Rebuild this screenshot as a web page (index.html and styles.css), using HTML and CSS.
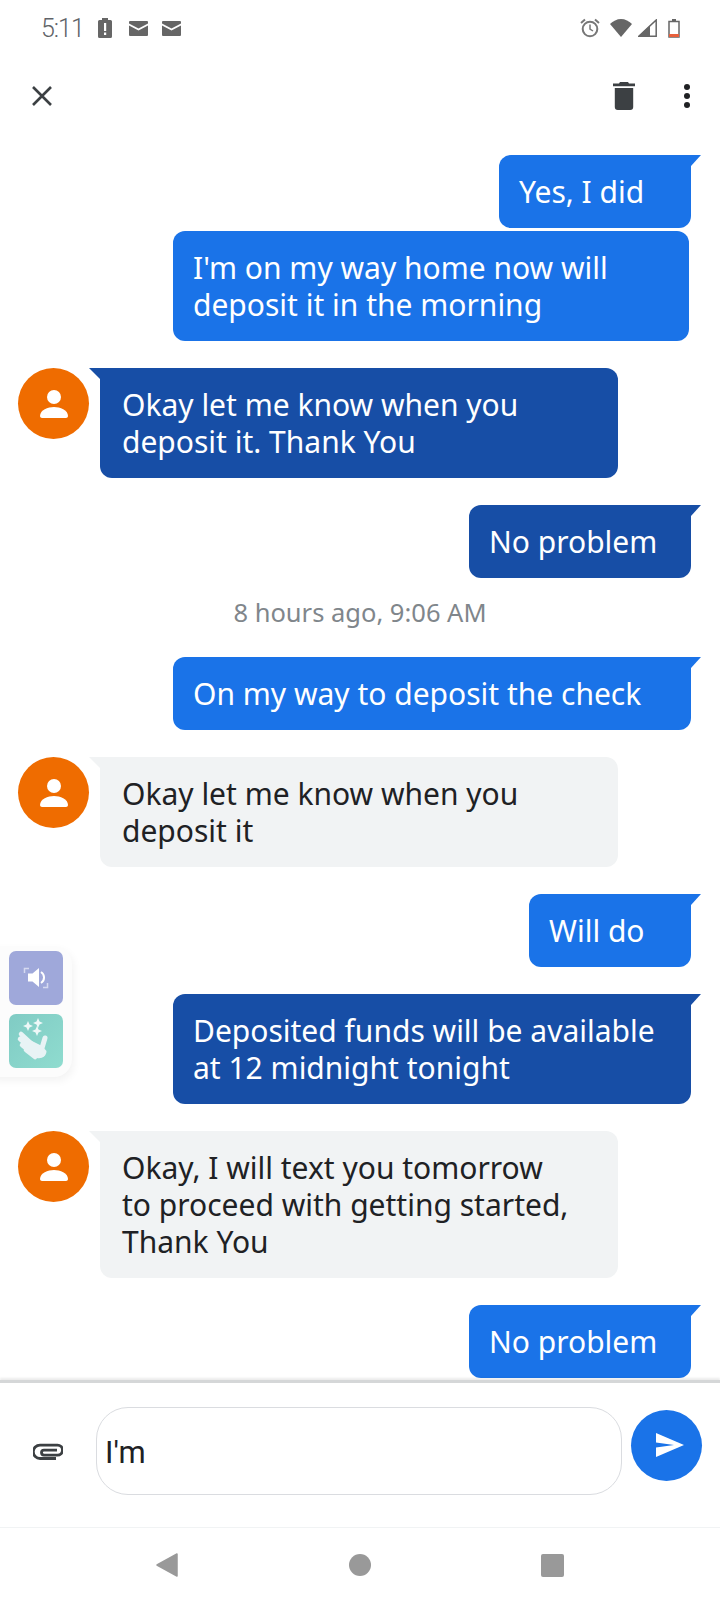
FILE: index.html
```html
<!DOCTYPE html>
<html lang="en">
<head>
	<meta charset="UTF-8">
	<title>Messages</title>
	<link rel="stylesheet" href="styles.css">
</head>
<body>
<div class="app">
	<div class="status">
		<span class="clock">5:11</span>
		<svg class="ic-alert" width="14" height="20" viewBox="0 0 14 20"><path d="M4 0h6v2h2.500a1.500 1.500 0 0 1 1.500 1.500V18.500a1.500 1.500 0 0 1-1.500 1.500H1.500A1.500 1.500 0 0 1 0 18.500V3.500A1.500 1.500 0 0 1 1.500 2H4z" fill="#666"/><path d="M6 5h2.200v8H6zM6 14.500h2.200V17H6z" fill="#fff"/></svg>
		<svg class="ic-mail" width="19" height="15" viewBox="0 0 19 15"><path d="M1 0h17a1 1 0 0 1 1 1v1.500L9.500 7.500 0 2.500V1a1 1 0 0 1 1-1zM0 4.500l9.500 5 9.500-5V14a1 1 0 0 1-1 1H1a1 1 0 0 1-1-1z" fill="#666"/></svg>
		<svg class="ic-mail" width="19" height="15" viewBox="0 0 19 15"><path d="M1 0h17a1 1 0 0 1 1 1v1.500L9.500 7.500 0 2.500V1a1 1 0 0 1 1-1zM0 4.500l9.500 5 9.500-5V14a1 1 0 0 1-1 1H1a1 1 0 0 1-1-1z" fill="#666"/></svg>
		<span class="spacer"></span>
		<svg width="20" height="20" viewBox="0 0 20 20"><circle cx="10" cy="11" r="7.300" fill="none" stroke="#777" stroke-width="2"/><path d="M10 6.500V11l3 2" fill="none" stroke="#777" stroke-width="1.500"/><path d="M1 5l4-3.500M19 5l-4-3.500" stroke="#777" stroke-width="2"/></svg>
		<svg class="ic-wifi" width="22" height="18" viewBox="0 0 22 18"><path d="M0 5C3 2 7 0 11 0s8 2 11 5L11 18z" fill="#666"/></svg>
		<svg class="ic-signal" width="19" height="18" viewBox="0 0 19 18"><path d="M18.200 1v16.200H1z" fill="none" stroke="#666" stroke-width="1.500"/><path d="M12 6.500V18H0z" fill="#666"/></svg>
		<svg class="ic-batt" width="12" height="19" viewBox="0 0 12 19"><path d="M4 0h4v2H4z" fill="#666"/><rect x="1" y="2.500" width="10" height="15.500" fill="none" stroke="#666" stroke-width="1.500"/><rect x="1" y="15" width="10" height="3" fill="#e8603c"/></svg>
	</div>

	<div class="toolbar">
		<svg width="20" height="20" viewBox="0 0 20 20"><path d="M1 1l18 18M19 1L1 19" stroke="#3c4043" stroke-width="2.600" fill="none"/></svg>
		<span class="spacer"></span>
		<svg class="ic-trash" width="22" height="28" viewBox="0 0 22 28"><path d="M7 0h8l1 1.500h6v2.800H0V1.500h6zM1.800 6h18.400v19a3 3 0 0 1-3 3H4.800a3 3 0 0 1-3-3z" fill="#3c4043"/></svg>
		<svg class="ic-more" width="6" height="24" viewBox="0 0 6 24"><circle cx="3" cy="3" r="3" fill="#202124"/><circle cx="3" cy="12" r="3" fill="#202124"/><circle cx="3" cy="21" r="3" fill="#202124"/></svg>
	</div>

	<div class="thread">
		<div class="msg out first"><div class="bubble blue w-yes">Yes, I did</div></div>
		<div class="msg out close"><div class="bubble blue notail">I'm on my way home now will deposit it in the morning</div></div>
		<div class="msg in">
			<div class="avatar"><svg width="28" height="28" viewBox="0 0 28 28"><circle cx="14" cy="7" r="7" fill="#fff"/><path d="M0 26c0-6 8-9 14-9s14 3 14 9c0 1-1 2-2 2H2c-1 0-2-1-2-2z" fill="#fff"/></svg></div>
			<div class="bubble dark">Okay let me know when you deposit it. Thank You</div>
		</div>
		<div class="msg out"><div class="bubble dark w-no">No problem</div></div>
		<div class="stamp">8 hours ago, 9:06 AM</div>
		<div class="msg out after-stamp"><div class="bubble blue wide">On my way to deposit the check</div></div>
		<div class="msg in">
			<div class="avatar"><svg width="28" height="28" viewBox="0 0 28 28"><circle cx="14" cy="7" r="7" fill="#fff"/><path d="M0 26c0-6 8-9 14-9s14 3 14 9c0 1-1 2-2 2H2c-1 0-2-1-2-2z" fill="#fff"/></svg></div>
			<div class="bubble grey">Okay let me know when you deposit it</div>
		</div>
		<div class="msg out"><div class="bubble blue w-will">Will do</div></div>
		<div class="msg out"><div class="bubble dark wide">Deposited funds will be available at 12 midnight tonight</div></div>
		<div class="msg in">
			<div class="avatar"><svg width="28" height="28" viewBox="0 0 28 28"><circle cx="14" cy="7" r="7" fill="#fff"/><path d="M0 26c0-6 8-9 14-9s14 3 14 9c0 1-1 2-2 2H2c-1 0-2-1-2-2z" fill="#fff"/></svg></div>
			<div class="bubble grey">Okay, I will text you tomorrow<br>to proceed with getting started, Thank You</div>
		</div>
		<div class="msg out"><div class="bubble blue w-no">No problem</div></div>
	</div>

	<div class="composer">
		<svg class="ic-clip" width="30" height="18" viewBox="0 0 30 18"><path d="M23 15.500H7a6.700 6.700 0 0 1 0-13.400h17.500a5 5 0 0 1 0 10H11a2.500 2.500 0 0 1 0-5h13" fill="none" stroke="#3c4043" stroke-width="2.800"/></svg>
		<div class="input">I'm</div>
		<div class="send"><svg width="28" height="24" viewBox="0 0 28 24"><path d="M0 0l28 12L0 24v-9.500L18 12 0 9.500z" fill="#fff"/></svg></div>
	</div>

	<div class="nav">
		<svg width="22" height="24" viewBox="0 0 22 24"><path d="M21 1v22L1 12z" fill="#999" stroke="#999" stroke-width="1.500" stroke-linejoin="round"/></svg>
		<svg width="22" height="22" viewBox="0 0 22 22"><circle cx="11" cy="11" r="11" fill="#999"/></svg>
		<svg width="23" height="23" viewBox="0 0 23 23"><rect width="23" height="23" rx="2" fill="#999"/></svg>
	</div>

	<div class="floater">
		<div class="tile tile-sound">
			<svg width="54" height="54" viewBox="0 0 54 54"><path d="M15.500 22v-4.500H20M38.500 32v4.500H34" fill="none" stroke="#d5d9f0" stroke-width="1.500"/><path d="M19 22.500h4.500L30 17v19l-6.500-5.500H19z" fill="#fff"/><path d="M32 21a6.500 6.500 0 0 1 0 11" fill="none" stroke="#fff" stroke-width="2"/></svg>
		</div>
		<div class="tile tile-hands">
			<svg width="54" height="54" viewBox="0 0 54 54"><path d="M19 7l1.500 3.500L24 12l-3.500 1.500L19 17l-1.500-3.500L14 12l3.500-1.500zM29 4l1.500 3.500L34 9l-3.500 1.500L29 14l-1.500-3.500L24 9l3.500-1.500zM28 12l1.500 3.500L33 17l-3.500 1.500L28 22l-1.500-3.500L23 17l3.500-1.500z" fill="#eef8f8"/><path d="M12 20l14 13M11 25l14 12M13 31l11 9M17 36l9 7" stroke="#e8f3f5" stroke-width="4.500" stroke-linecap="round"/><path d="M36 24l-3 10" stroke="#e8f3f5" stroke-width="5" stroke-linecap="round"/><path d="M21 26l12 6 4.500 5c0 5-4.500 8-9.500 7l-8-4z" fill="#e8f3f5"/></svg>
		</div>
	</div>
</div>
</body>
</html>
```

FILE: styles.css
```css
*{padding: 0;margin: 0;box-sizing: border-box;}
body{background: #fff;font-family: "Noto Sans", sans-serif;}
svg{display: block;flex: none;}
.app{width: 720px;height: 1600px;position: relative;overflow: hidden;display: flex;flex-direction: column;}
.spacer{flex: 1;}

.status{height: 56px;padding: 0 40px 0 41px;display: flex;align-items: center;}
.clock{font-family: Roboto, sans-serif;font-weight: 300;font-size: 25px;letter-spacing: -1px;color: #5f6368;width: 57px;}
.ic-mail{margin-left: 17px;}
.ic-mail + .ic-mail{margin-left: 14px;}
.ic-wifi{margin-left: 10px;}
.ic-signal{margin-left: 6px;}
.ic-batt{margin-left: 11px;}

.toolbar{height: 80px;padding: 0 30px 0 32px;display: flex;align-items: center;}
.ic-more{margin-left: 49px;}

.thread{flex: 1;display: flex;flex-direction: column;overflow: hidden;padding-top: 19px;}
.msg{display: flex;margin-top: 27px;flex: none;}
.msg.first{margin-top: 0;}
.msg.close{margin-top: 3px;}
.msg.after-stamp{margin-top: 28px;}
.out{justify-content: flex-end;padding-right: 29px;}
.out.close{padding-right: 31px;}
.in{padding-left: 18px;}

.bubble{position: relative;font-size: 30px;line-height: 37px;padding: 18px 20px;border-radius: 12px;color: #fff;}
.blue{background: #1a73e8;}
.dark{background: #174ea6;}
.grey{background: #f1f3f4;color: #202124;}
.wide{width: 518px;}
.w-yes{width: 192px;}
.w-no{width: 222px;}
.w-will{width: 162px;}
.in .bubble{width: 518px;margin-left: 11px;padding: 18px 22px;border-top-left-radius: 0;}
.out .bubble{border-top-right-radius: 0;}
.out .bubble.notail{border-top-right-radius: 12px;width: 516px;}

.out .bubble::after{content: "";position: absolute;top: 0;right: -10px;border-top: 11px solid #1a73e8;border-right: 10px solid transparent;}
.out .dark::after{border-top-color: #174ea6;}
.out .notail::after{display: none;}
.in .bubble::before{content: "";position: absolute;top: 0;left: -11px;border-top: 11px solid #174ea6;border-left: 11px solid transparent;}
.in .grey::before{border-top-color: #f1f3f4;}

.avatar{width: 71px;height: 71px;border-radius: 50%;background: #ef6c00;display: flex;align-items: center;justify-content: center;}
.stamp{text-align: center;font-size: 25.500px;line-height: 34px;color: #80868b;margin-top: 17px;flex: none;}

.composer{height: 148px;border-top: 3px solid #d5d7d8;box-shadow: 0 -2px 2px rgba(0,0,0,.08);position: relative;display: flex;align-items: center;padding: 0 18px 0 33px;border-bottom: 1px solid #f1f3f4;}
.ic-clip{margin-bottom: 7px;}
.input{width: 526px;height: 88px;margin-left: 33px;margin-bottom: 8px;border: 1px solid #dadce0;border-radius: 32px;font-family: Roboto, sans-serif;font-size: 31px;color: #202124;padding: 3px 0 0 8px;display: flex;align-items: center;}
.send{width: 71px;height: 71px;border-radius: 50%;background: #1a73e8;margin-left: 9px;margin-bottom: 20px;display: flex;align-items: center;justify-content: center;padding-left: 7px;}

.nav{height: 72px;display: flex;align-items: center;padding: 2px 156px 0;justify-content: space-between;}

.floater{position: absolute;left: -20px;top: 946px;width: 92px;height: 131px;background: #fcfcfc;border-radius: 18px;box-shadow: 2px 4px 8px rgba(0,0,0,.05);padding: 5px 0 0 29px;}
.tile{width: 54px;height: 54px;border-radius: 7px;display: flex;align-items: center;justify-content: center;margin-bottom: 9px;}
.tile-sound{background: #9fa8da;}
.tile-hands{background: linear-gradient(135deg,#80cbc4,#8fdccf);}
```
